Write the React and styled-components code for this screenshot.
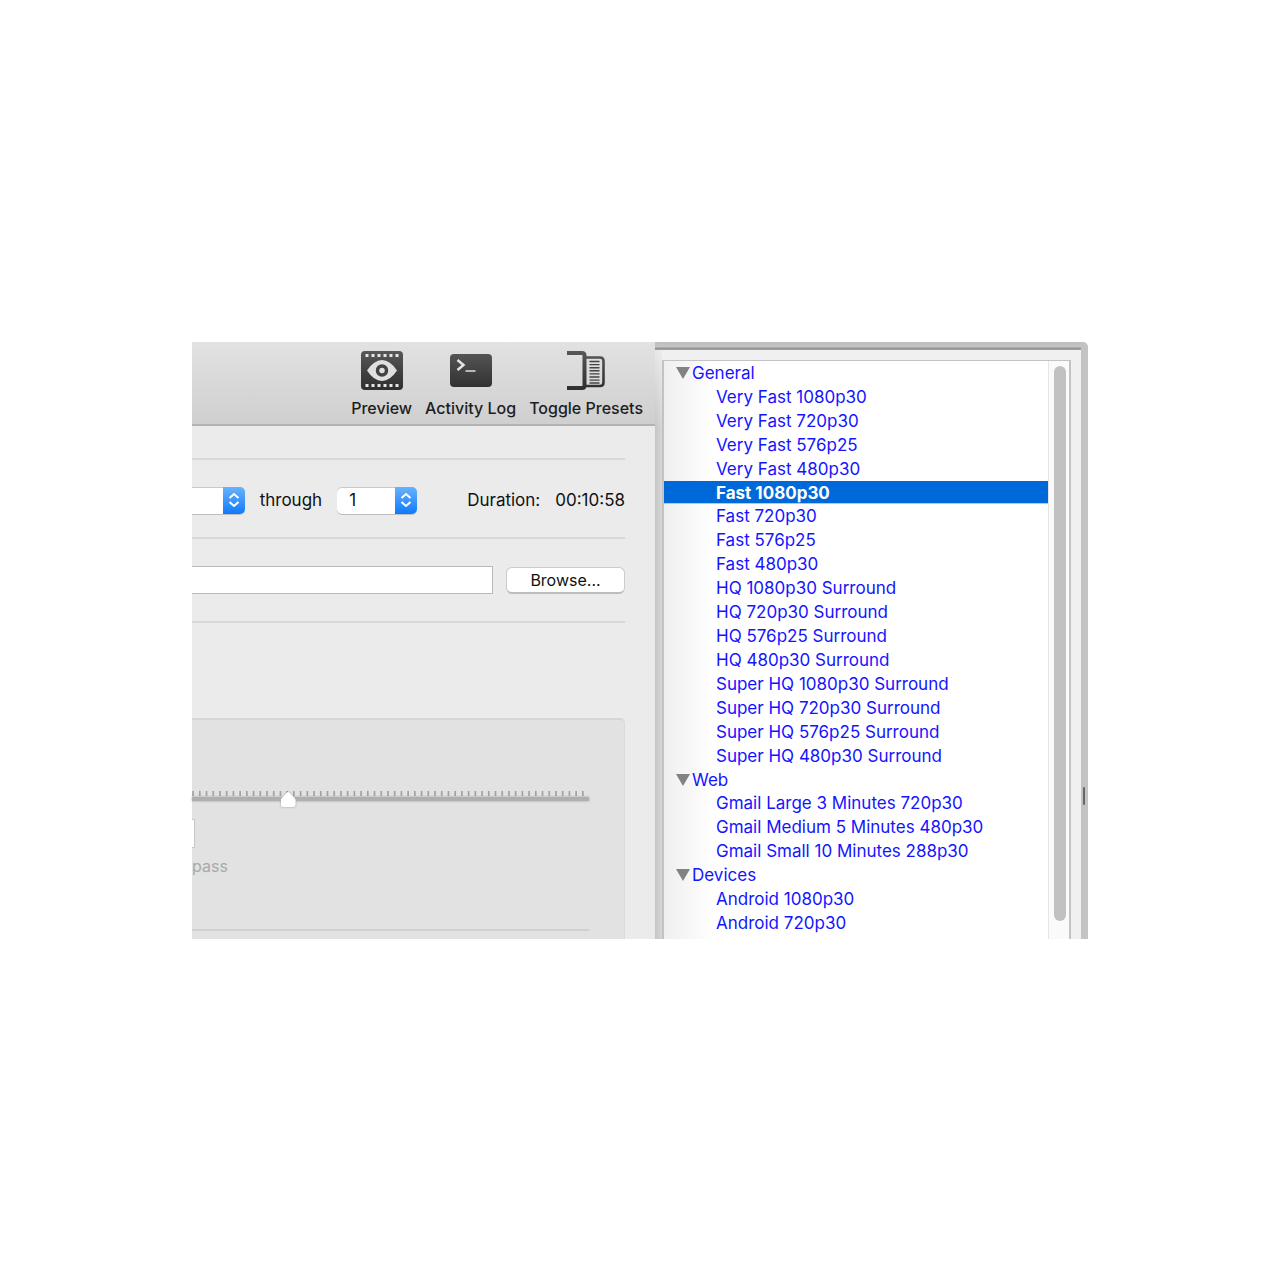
import styled, { createGlobalStyle } from "styled-components";

const GlobalStyle = createGlobalStyle`
  * {
    box-sizing: border-box;
  }
  body {
    margin: 0;
    background-color: white;
    color: #1e1e1e;
    font-family: Inter, "Liberation Sans", sans-serif;
    font-size: 17px;
    line-height: 24px;
  }
  button, input, select {
    font: inherit;
    color: inherit;
    margin: 0;
  }
`;

const Page = styled.div`
  display: flex;
  flex-direction: column;
  justify-content: center;
  min-height: 100vh;
  padding-top: 1px;
`;
const Window = styled.div`
  display: flex;
  width: 70%;
  margin: 0 auto;
`;
const Main = styled.main`
  flex: 1;
  min-width: 0;
  display: flex;
  flex-direction: column;
  background-color: #ebebeb;
`;

const Toolbar = styled.header`
  display: flex;
  justify-content: flex-end;
  gap: 13px;
  height: 84px;
  padding: 8px 12px 0 0;
  border-bottom: 2px solid #b3b3b3;
  background: linear-gradient(#e2e2e2, #cfcfcf);
`;
const ToolButton = styled.button`
  display: flex;
  flex-direction: column;
  align-items: center;
  gap: 6px;
  padding: 0;
  border: none;
  background: none;
  font-size: 16px;
  font-weight: 500;
  white-space: nowrap;
`;

const Rule = styled.hr`
  width: 100%;
  height: 2px;
  margin: 0;
  border: none;
  background-color: ${(props) => props.$color || "#d8d8d8"};
`;
const Form = styled.div`
  display: flex;
  flex-direction: column;
  flex: 1;
  padding: 32px 30px 0 0;
`;
const Row = styled.div`
  display: flex;
  align-items: center;
  gap: ${(props) => props.$gap};
  height: ${(props) => props.$height};
  padding-top: ${(props) => props.$top || "0"};
  color: #111;
`;
const Pair = styled.div`
  display: flex;
  align-items: center;
  flex: ${(props) => (props.$grow ? "1" : "none")};
  gap: 15px;
  white-space: nowrap;
`;
const SelectBox = styled.div`
  position: relative;
  flex: ${(props) => (props.$grow ? "1" : "0 0 80px")};
  height: 27px;
  overflow: hidden;
  border-radius: ${(props) => (props.$grow ? "0 5px 5px 0" : "5px")};
  background-color: white;
  box-shadow: inset 0 1px 0 #c9c9c9, 0 1px 0 #bdbdbd;
`;
const Select = styled.select`
  width: 100%;
  height: 100%;
  padding: 0 24px 0 12px;
  border: none;
  appearance: none;
  background: none;
`;
const Stepper = styled.span`
  position: absolute;
  top: 0;
  right: 0;
  display: flex;
  align-items: center;
  justify-content: center;
  width: 22px;
  height: 100%;
  background: linear-gradient(#69b2fb, #1079fd);
  pointer-events: none;
`;
const PathInput = styled.input`
  flex: 1;
  min-width: 0;
  height: 28px;
  padding: 0 6px;
  border: 1px solid #b9b9b9;
  border-left: none;
  background-color: white;
`;
const Browse = styled.button`
  width: 119px;
  height: 27px;
  padding: 0;
  border: 1px solid #cbcbcb;
  border-bottom: 2px solid #bdbdbd;
  border-radius: 6px;
  background-color: white;
  font-size: 16px;
`;

const Group = styled.section`
  flex: 1;
  display: flex;
  flex-direction: column;
  margin-top: 95px;
  padding: 71px 35px 0 0;
  border: 1px solid #dadada;
  border-top: 2px solid #d6d6d6;
  border-left: none;
  border-bottom: none;
  border-radius: 0 5px 0 0;
  background-color: #e2e2e2;
`;
const SliderBox = styled.div`
  display: flex;
  flex-direction: column;
`;
const Ticks = styled.svg`
  display: block;
  width: 100%;
  height: 5px;
`;
const Slider = styled.input`
  width: 100%;
  height: 7px;
  appearance: none;
  background: linear-gradient(#afafaf, #afafaf) 0 1px / 100% 4px no-repeat;
  border-radius: 0 3px 3px 0;
  filter: drop-shadow(0 0 1px rgba(0, 0, 0, 0.3));

  &::-webkit-slider-thumb {
    appearance: none;
    width: 15px;
    height: 15px;
    background-color: white;
    clip-path: path("M7.5 0Q8.3 0 9 .8L14.2 6.5Q15 7.4 15 8.5V12Q15 15 12 15H3Q0 15 0 12V8.5Q0 7.4 .8 6.5L6 .8Q6.7 0 7.5 0Z");
  }
`;
const Passes = styled.div`
  display: flex;
  flex-direction: column;
  gap: 6px;
  margin-top: 16px;
  margin-bottom: 51px;
`;
const RateInput = styled.input`
  width: 3px;
  height: 29px;
  padding: 0;
  border: 1px solid #c6c6c6;
  border-left: none;
  background-color: white;
`;
const PassLabel = styled.span`
  color: #a9a9a9;
  font-size: 16px;
`;

const Drawer = styled.aside`
  position: relative;
  display: flex;
  width: 433px;
  padding-top: 8px;
  border-right: 7px solid #c3c3c3;
  border-radius: 0 5px 0 0;
  background: linear-gradient(#bdbdbd, #c6c6c6 5px, #8f8f8f 6px, #a5a5a5 8px, #f0f0f0 8px);
`;
const Edge = styled.div`
  width: 7px;
  background: linear-gradient(rgba(240, 240, 240, 0.8), transparent 80px),
    linear-gradient(90deg, #c5c5c5, #d6d6d6);
`;
const Presets = styled.div`
  flex: 1;
  display: flex;
  margin: 10px 10px 0 0;
  border: 2px solid #c3c3c3;
  border-top-width: 1px;
  border-bottom: none;
  background: linear-gradient(90deg, #efefef, white 50px);
`;
const PresetList = styled.ul`
  flex: 1;
  display: grid;
  grid-template-rows: repeat(24, 1fr);
  height: 578px;
  margin: 0;
  padding: 0 0 4px;
  list-style: none;
`;
const Preset = styled.li`
  display: flex;
  align-items: center;
  min-height: 0;
  padding-left: ${(props) => (props.$group ? "12px" : "52px")};
  background-color: ${(props) => (props.$selected ? "#0069d9" : "transparent")};
  box-shadow: ${(props) => (props.$selected ? "inset 0 -1px 0 #a5cdf5" : "none")};
  color: ${(props) => (props.$selected ? "white" : "#1414ff")};
  font-weight: ${(props) => (props.$selected ? "700" : "400")};
  line-height: 22px;
  white-space: nowrap;
`;
const Triangle = styled.svg`
  width: 14px;
  height: 12px;
  margin-right: 2px;
`;
const ScrollTrack = styled.div`
  width: 21px;
  padding: 5px 3px 18px 5px;
  border-left: 1px solid #e6e6e6;
  background-color: #fafafa;
`;
const ScrollThumb = styled.div`
  width: 12px;
  height: 100%;
  border-radius: 6px;
  background-color: #c1c1c1;
`;
const Grip = styled.div`
  position: absolute;
  top: 445px;
  right: -4px;
  width: 2px;
  height: 18px;
  border-radius: 1px;
  background-color: #666;
`;

const groups = [
  {
    name: "General",
    presets: [
      "Very Fast 1080p30",
      "Very Fast 720p30",
      "Very Fast 576p25",
      "Very Fast 480p30",
      "Fast 1080p30",
      "Fast 720p30",
      "Fast 576p25",
      "Fast 480p30",
      "HQ 1080p30 Surround",
      "HQ 720p30 Surround",
      "HQ 576p25 Surround",
      "HQ 480p30 Surround",
      "Super HQ 1080p30 Surround",
      "Super HQ 720p30 Surround",
      "Super HQ 576p25 Surround",
      "Super HQ 480p30 Surround",
    ],
  },
  {
    name: "Web",
    presets: [
      "Gmail Large 3 Minutes 720p30",
      "Gmail Medium 5 Minutes 480p30",
      "Gmail Small 10 Minutes 288p30",
    ],
  },
  { name: "Devices", presets: ["Android 1080p30", "Android 720p30"] },
];

const IconGradient = ({ id }) => (
  <defs>
    <linearGradient id={id} gradientUnits="userSpaceOnUse" x1="0" y1="0" x2="0" y2="40">
      <stop offset="0" stopColor="#585858" />
      <stop offset="1" stopColor="#2e2e2e" />
    </linearGradient>
  </defs>
);

const PreviewIcon = () => (
  <svg width="42" height="40" viewBox="0 0 42 40">
    <IconGradient id="film" />
    <rect y="1" width="42" height="39" rx="4" fill="url(#film)" />
    {[4.5, 10.5, 16.5, 22.5, 28.5, 34.5].map((x) => (
      <g key={x} fill="#e6e6e6">
        <rect x={x} y="4" width="3" height="3" />
        <rect x={x} y="34" width="3" height="3" />
      </g>
    ))}
    <path d="M6 20.5Q13 10 21 10T36 20.5Q29 31 21 31T6 20.5Z" fill="#e0e0e0" />
    <circle cx="21" cy="20.5" r="4.5" fill="none" stroke="#444" strokeWidth="3.5" />
  </svg>
);

const LogIcon = () => (
  <svg width="42" height="40" viewBox="0 0 42 40">
    <IconGradient id="terminal" />
    <rect y="4" width="42" height="33" rx="4" fill="url(#terminal)" />
    <path d="M7.5 10L13.5 15L7.5 20" fill="none" stroke="#e4e4e4" strokeWidth="2.5" />
    <path d="M15.5 21H25.5" stroke="#d5d5d5" strokeWidth="1.6" />
  </svg>
);

const PresetsIcon = () => (
  <svg width="38" height="40" viewBox="0 0 38 40">
    <IconGradient id="drawer" />
    <g fill="none" stroke="url(#drawer)">
      <path d="M0 3H15Q17.5 3 17.5 5.5V35.5Q17.5 38 15 38H0" strokeWidth="4" />
      <path d="M19 7.5H33Q36.5 7.5 36.5 11V32.5Q36.5 36 33 36H19" strokeWidth="2.6" />
      <path
        d="M22.5 11.5H32.5M22.5 14.6H32.5M22.5 17.7H32.5M22.5 20.8H32.5M22.5 23.9H32.5M22.5 27H32.5M22.5 30.1H32.5M22.5 33H32.5"
        stroke="#444"
        strokeWidth="1.4"
      />
    </g>
  </svg>
);

const PopUp = ({ label, value, grow }) => (
  <SelectBox $grow={grow}>
    <Select aria-label={label} defaultValue={value}>
      <option value={value}>{value}</option>
    </Select>
    <Stepper>
      <svg width="12" height="16" viewBox="0 0 12 16" fill="none" stroke="white" strokeWidth="2">
        <path d="M1.5 6L6 2L10.5 6M1.5 10L6 14L10.5 10" />
      </svg>
    </Stepper>
  </SelectBox>
);

const tickCount = 59;

const QualitySlider = () => (
  <SliderBox>
    <Ticks viewBox="0 0 397 5" preserveAspectRatio="xMaxYMid slice">
      {Array.from({ length: tickCount }, (_, i) => (
        <rect key={i} x={390 - i * 6.72} width="1.7" height="5" fill="#a2a2a2" />
      ))}
    </Ticks>
    <Slider type="range" aria-label="Quality" min="0" max="1000" defaultValue="232" />
  </SliderBox>
);

const App = () => {
  return (
    <Page>
      <GlobalStyle />
      <Window>
        <Main>
          <Toolbar>
            <ToolButton>
              <PreviewIcon />
              Preview
            </ToolButton>
            <ToolButton>
              <LogIcon />
              Activity Log
            </ToolButton>
            <ToolButton>
              <PresetsIcon />
              Toggle Presets
            </ToolButton>
          </Toolbar>
          <Form>
            <Rule />
            <Row $gap="50px" $height="77px" $top="3px">
              <Pair $grow>
                <PopUp label="First chapter" value="" grow />
                <span>through</span>
                <PopUp label="Last chapter" value="1" />
              </Pair>
              <Pair>
                <span>Duration:</span>
                <span>00:10:58</span>
              </Pair>
            </Row>
            <Rule />
            <Row $gap="13px" $height="82px">
              <PathInput aria-label="Destination" />
              <Browse>Browse...</Browse>
            </Row>
            <Rule />
            <Group>
              <QualitySlider />
              <Passes>
                <RateInput aria-label="Average bitrate" />
                <PassLabel>pass</PassLabel>
              </Passes>
              <Rule $color="#d0d0d0" />
            </Group>
          </Form>
        </Main>
        <Drawer>
          <Edge />
          <Presets>
            <PresetList>
              {groups.flatMap((group) => [
                <Preset key={group.name} $group>
                  <Triangle viewBox="0 0 14 12">
                    <path d="M0 0H14L7 12Z" fill="#828282" />
                  </Triangle>
                  {group.name}
                </Preset>,
                ...group.presets.map((name) => (
                  <Preset key={name} $selected={name === "Fast 1080p30"}>
                    {name}
                  </Preset>
                )),
              ])}
            </PresetList>
            <ScrollTrack>
              <ScrollThumb />
            </ScrollTrack>
          </Presets>
          <Grip />
        </Drawer>
      </Window>
    </Page>
  );
};

export default App;
